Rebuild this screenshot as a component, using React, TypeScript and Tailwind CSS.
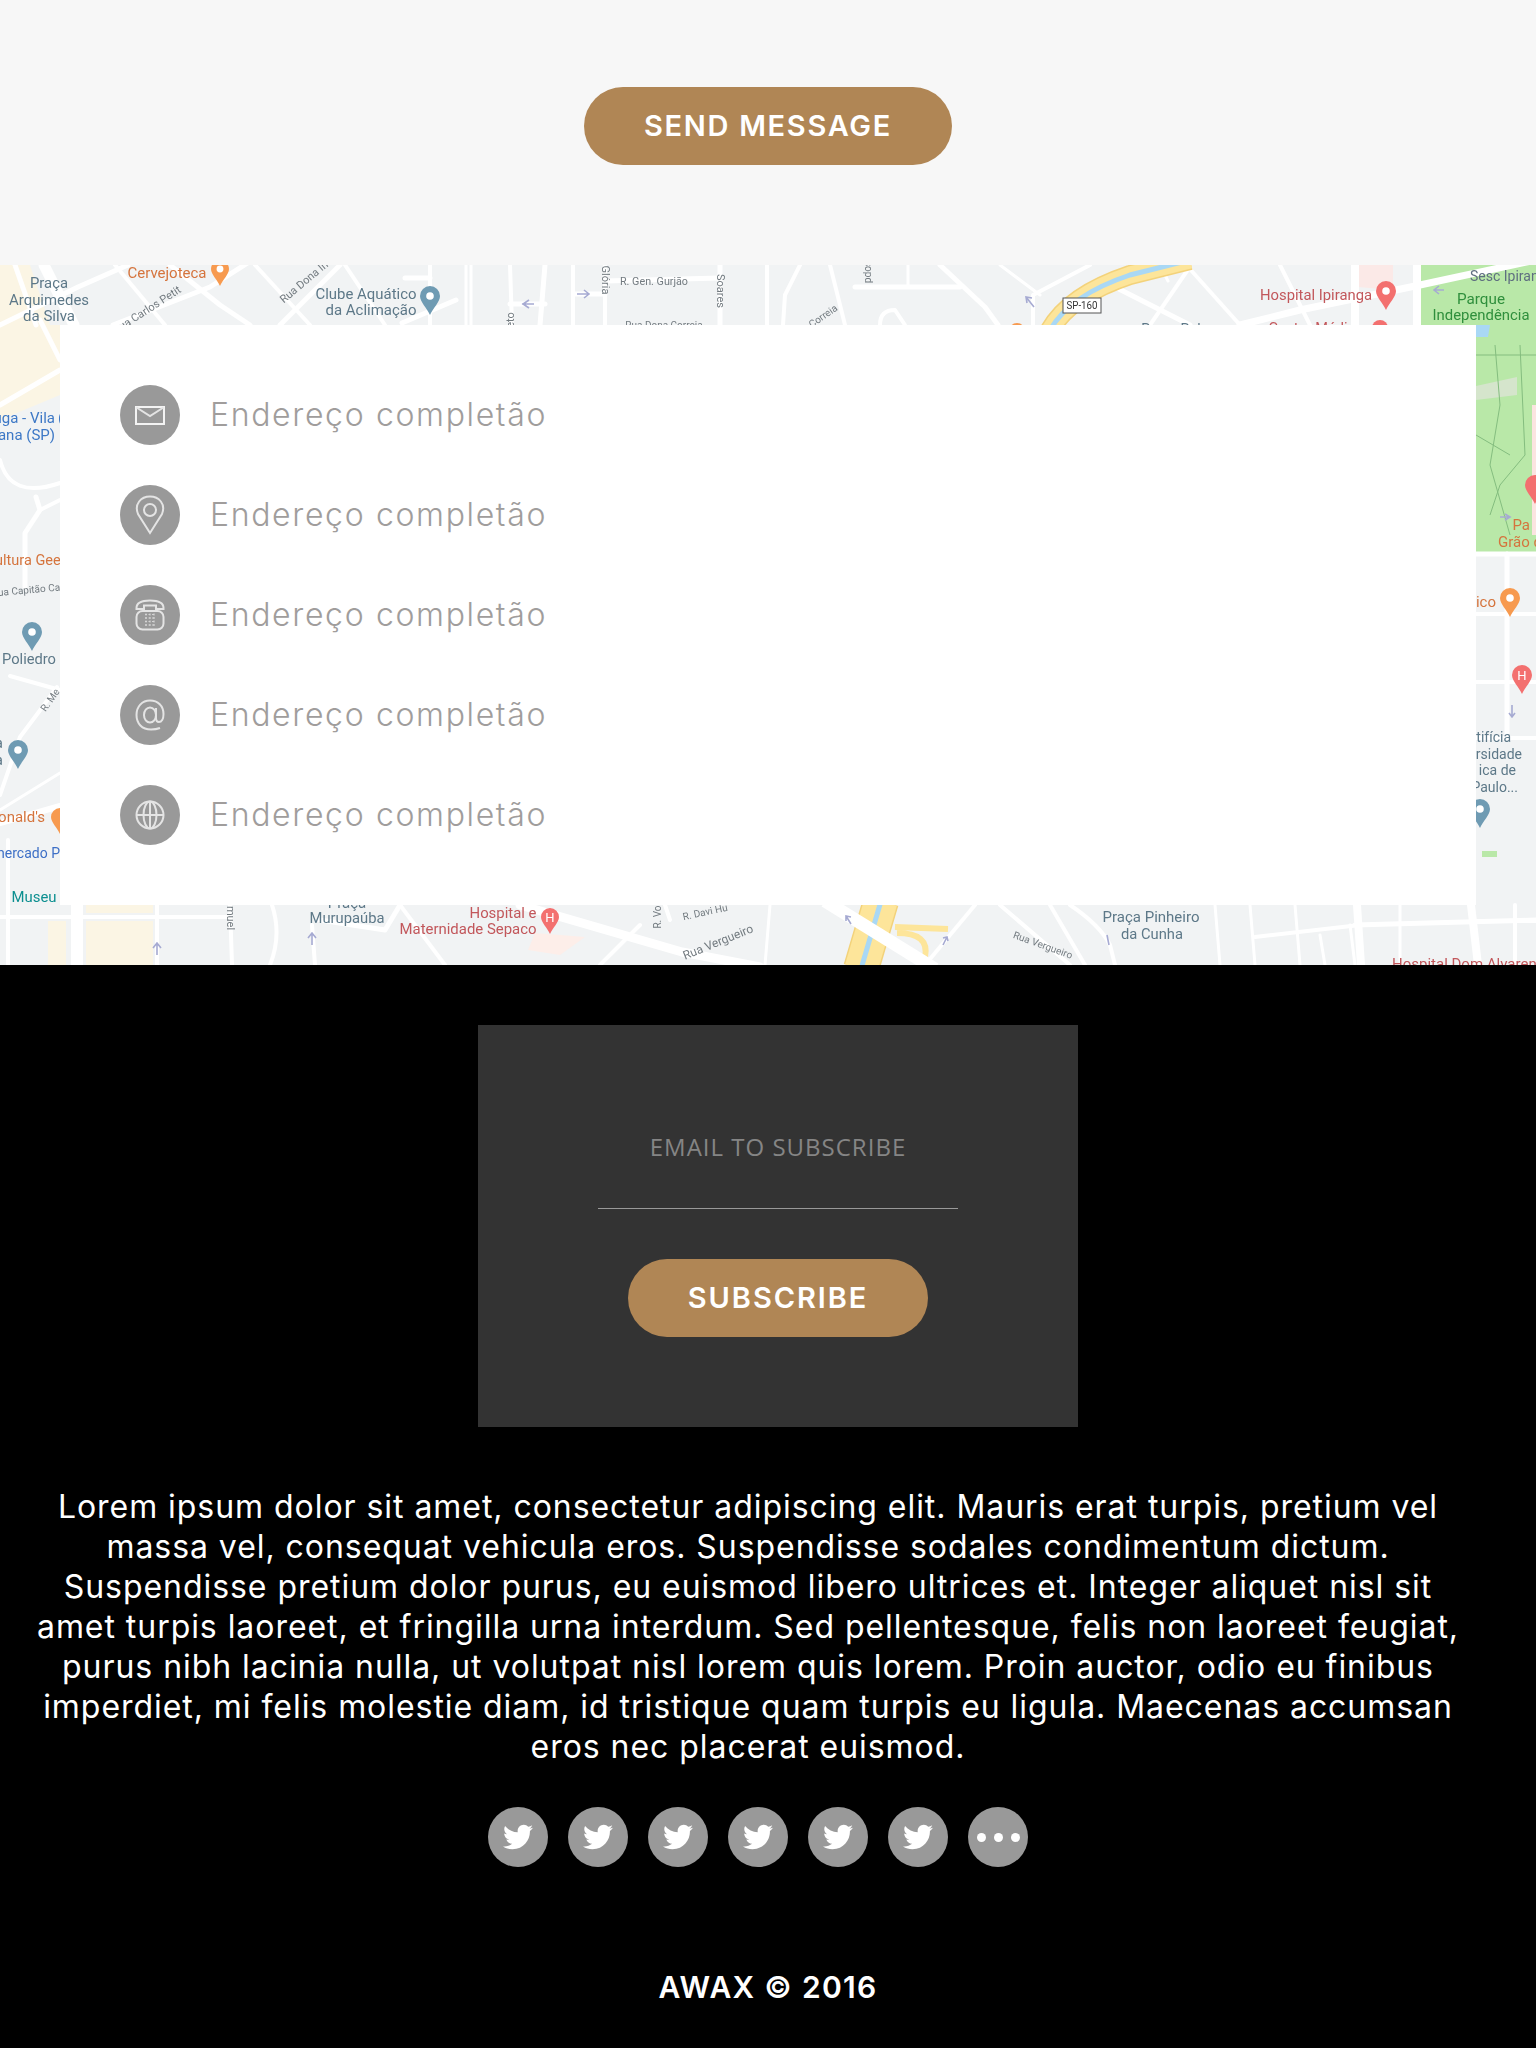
import React from "react";
import { FaTwitter } from "react-icons/fa";

const ADDRESS = "Endereço completão";
const PARAGRAPH = [
  "Lorem ipsum dolor sit amet, consectetur adipiscing elit. Mauris erat turpis, pretium vel",
  "massa vel, consequat vehicula eros. Suspendisse sodales condimentum dictum.",
  "Suspendisse pretium dolor purus, eu euismod libero ultrices et. Integer aliquet nisl sit",
  "amet turpis laoreet, et fringilla urna interdum. Sed pellentesque, felis non laoreet feugiat,",
  "purus nibh lacinia nulla, ut volutpat nisl lorem quis lorem. Proin auctor, odio eu finibus",
  "imperdiet, mi felis molestie diam, id tristique quam turpis eu ligula. Maecenas accumsan",
  "eros nec placerat euismod.",
];

const BLUE_GRAY = "#5d7888";
const ORANGE = "#d5743d";
const RED = "#c2575b";
const GRAY = "#737b80";

type Road = [string, number];
const ROADS: Road[] = [
  ["M15 0L36 60", 5], ["M44 0L74 60", 11], ["M0 60L78 22L128 0", 5], ["M113 60L210 22L260 -10", 5],
  ["M170 0L220 40L250 60", 5], ["M115 0L165 60", 4], ["M255 0L310 60", 4], ["M280 60L340 0", 5], ["M345 0L385 60", 4],
  ["M402 58L456 35", 5], ["M405 13H430", 5], ["M430 0V60", 4], ["M466 0V60", 3], ["M471 0V60", 3],
  ["M510 0L512 60", 4], ["M510 39H545", 5], ["M545 0L540 60", 5], ["M573 0V60", 4], ["M575 29H605", 5], ["M605 0V60", 4],
  ["M605 16L720 13", 5], ["M720 0V60", 5], ["M767 0V60", 4],
  ["M800 0L785 30L783 60", 4], ["M830 0L845 60", 4], ["M855 22H960", 5], ["M908 0V22", 3], ["M940 0L985 42L998 60", 5],
  ["M1033 60V30L1090 0", 4], ["M1000 0L1040 30", 3], ["M1111 20L1190 60", 5], ["M1189 3L1150 60", 4], ["M1189 3L1240 60", 4],
  ["M1280 0L1310 60", 4], ["M1240 60L1300 45L1420 20L1536 -5", 7], ["M1355 0V60", 8], ["M1417 0V60", 8],
  ["M880 60Q880 45 895 45L905 60", 4], ["M1160 0L1168 16", 3],
  ["M0 140L60 105", 5], ["M40 55L60 95", 5], ["M0 195Q10 235 60 218", 4], ["M36 232L40 245L25 268V322", 5], ["M40 245L60 235", 4],
  ["M10 411L60 425", 4], ["M57 422L38 448L20 472L0 530", 4], ["M0 558L60 541", 6], ["M60 508L0 545", 3], ["M8 575V640", 4],
  ["M8 640V700", 4], ["M77 640V700", 12], ["M157 640V700", 4], ["M0 652H230", 4], ["M230 640L232 700", 4],
  ["M272 640Q282 670 270 700", 4], ["M312 660L315 700", 4], ["M320 655L385 665L400 640", 5], ["M400 640Q430 680 445 700", 4],
  ["M520 640L682 687L760 702", 9], ["M600 700L640 660", 4], ["M670 655L665 640", 4], ["M765 700L770 640", 3],
  ["M925 700L975 640", 4], ["M1000 640L1070 700", 4], ["M1050 640L1085 700", 4], ["M1070 640Q1100 660 1110 680L1115 700", 4],
  ["M1215 640L1220 700", 3], ["M1250 640L1255 700", 3], ["M1255 672L1360 660", 4], ["M1320 670L1325 700", 3], ["M1350 660L1355 700", 3],
  ["M1295 640L1300 700", 3], ["M1357 640L1361 700", 8], ["M1400 640V700", 3], ["M1355 660L1536 655", 5], ["M1471 640L1478 700", 8],
  ["M1476 289H1536", 5], ["M1476 349H1536", 4], ["M1476 417H1536", 4], ["M1476 473H1536", 4], ["M1507 289V473", 5], ["M1515 640V700", 4], ["M1476 656H1536", 4],
];

const ARROWS = [
  "M522 39H534M529 35L523 39L529 43",
  "M577 29H589M584 25L589 29L584 33",
  "M1434 25H1444M1439 21L1434 25L1439 29",
  "M157 690V678M153 683L157 678L161 683",
  "M312 680V668M308 673L312 668L316 673",
  "M1026 32L1034 42M1027 38L1026 32L1032 33",
  "M1500 252H1510M1505 249L1510 252L1505 255",
  "M1512 440V452M1509 448L1512 452L1515 448",
  "M851 659L846 651M846 656L846 651L851 652",
  "M943 680L947 672M943 673L947 672L948 676",
  "M1107 670L1109 680",
];

function Pin({ x, y, c, r = 9, dot = true }: { x: number; y: number; c: string; r?: number; dot?: boolean }) {
  return (
    <g>
      <path d={`M${x} ${y + r * 1.9}C${x - r * 0.3} ${y + r * 1.2} ${x - r} ${y + r * 0.6} ${x - r} ${y}A${r} ${r} 0 1 1 ${x + r} ${y}C${x + r} ${y + r * 0.6} ${x + r * 0.3} ${y + r * 1.2} ${x} ${y + r * 1.9}Z`} fill={c} />
      {dot && <circle cx={x} cy={y} r={r * 0.38} fill="#fff" />}
    </g>
  );
}

function L({ x, y, t, c = BLUE_GRAY, s = 15, a = "middle", r = 0, w }: { x: number; y: number; t: string; c?: string; s?: number; a?: "start" | "middle" | "end"; r?: number; w?: number }) {
  return (
    <text x={x} y={y} fill={c} fontSize={s} textAnchor={a} dominantBaseline="central" transform={r ? `rotate(${r} ${x} ${y})` : undefined} textLength={w} lengthAdjust={w ? "spacingAndGlyphs" : undefined}>
      {t}
    </text>
  );
}

function MapArt() {
  return (
    <svg viewBox="0 0 1536 700" className="absolute inset-0 w-full h-full blur-[0.5px] [font-family:Roboto,sans-serif]" aria-hidden="true">
      <rect width="1536" height="700" fill="#f1f3f4" />
      <path d="M0 0H30L50 60H60V130L0 155Z" fill="#fbf5e4" />
      <path d="M86 656H153V700H86ZM86 640H153V648H86ZM48 656H66V700H48Z" fill="#fbf5e4" />
      <path d="M1358 0H1393V25L1358 22Z" fill="#fbe9e7" />
      <path d="M535 668L585 672L560 690L528 685Z" fill="#fdeee9" />
      <path d="M1420 0H1536V287H1476V60H1420Z" fill="#b9e8a8" />
      <path d="M1532 140H1536V270H1532Z" fill="#fbe4e0" />
      <path d="M1476 60H1490L1488 72H1476Z" fill="#a9d8f5" />
      <path d="M1476 121L1517 112V130L1476 135Z" fill="#d5e5cc" />
      <path d="M1482 586H1497V592H1482Z" fill="#b9e8a8" />
      <path d="M1495 80L1500 140L1490 200L1510 270M1520 80L1525 190L1500 220L1490 250M1476 90H1536M1476 170L1510 190" stroke="#84bd7f" strokeWidth="1" fill="none" />
      {ROADS.map(([d, w], i) => (
        <path key={i} d={d} stroke="#ffffff" strokeWidth={w} fill="none" strokeLinecap="round" strokeLinejoin="round" />
      ))}
      <g fill="none" strokeLinecap="butt">
        <path d="M1190 -5L1130 10Q1070 30 1050 65" stroke="#f3d27a" strokeWidth="20" />
        <path d="M1190 -5L1130 10Q1070 30 1050 65" stroke="#fde59a" strokeWidth="17" />
        <path d="M1190 -5L1130 10Q1070 30 1050 65" stroke="#a9d8f5" strokeWidth="5" />
        <path d="M881 636L861 704" stroke="#f3d27a" strokeWidth="36" />
        <path d="M881 636L861 704" stroke="#fde59a" strokeWidth="33" />
        <path d="M881 636L861 704" stroke="#a9d8f5" strokeWidth="5" />
        <path d="M895 662L948 664M897 668Q930 668 925 692" stroke="#fde59a" strokeWidth="6" />
      </g>
      <path d="M825 636L935 704" stroke="#fff" strokeWidth="13" fill="none" />
      <path d={ARROWS.join("")} stroke="#a6aad2" strokeWidth="1.6" fill="none" />

      <L x={49} y={18} t="Praça" w={38} />
      <L x={49} y={35} t="Arquimedes" w={80} />
      <L x={49} y={51} t="da Silva" w={52} />
      <L x={167} y={8} t="Cervejoteca" c={ORANGE} w={79} />
      <Pin x={220} y={4} c="#f79a4f" r={9} />
      <L x={147} y={45} t="Rua Carlos Petit" c={GRAY} s={11} r={-33} />
      <L x={304} y={17} t="Rua Dona In" c={GRAY} s={11} r={-40} />
      <L x={366} y={29} t="Clube Aquático" w={101} />
      <L x={371} y={45} t="da Aclimação" w={91} />
      <Pin x={430} y={31} c="#6f9bb3" r={10} />
      <L x={654} y={16} t="R. Gen. Gurjão" c={GRAY} s={11} w={68} />
      <L x={605} y={15} t="Glória" c={GRAY} s={11} r={90} />
      <L x={720} y={26} t="Soares" c={GRAY} s={11} r={90} />
      <L x={510} y={55} t="eto" c={GRAY} s={11} r={-90} />
      <L x={664} y={60} t="Rua Dona Correia" c={GRAY} s={10} />
      <L x={868} y={7} t="sopd" c={GRAY} s={10} r={90} />
      <L x={823} y={51} t="Correia" c={GRAY} s={10} r={-35} />
      <rect x={1063} y={33} width={38} height={15} fill="#fff" stroke="#555" strokeWidth="1" />
      <L x={1082} y={40.5} t="SP-160" c="#333" s={10} w={31} />
      <L x={1316} y={30} t="Hospital Ipiranga" c={RED} w={112} />
      <Pin x={1386} y={26} c="#f3706f" r={10} />
      <L x={1316} y={63} t="Centro Médico" c={RED} w={95} />
      <circle cx={1380} cy={63} r={8} fill="#f3706f" />
      <circle cx={1017} cy={66} r={8} fill="#f79a4f" />
      <L x={1171} y={64} t="Praça Pol" c={BLUE_GRAY} s={14} />
      <L x={1470} y={11} t="Sesc Ipiranga" a="start" c="#5f6f80" s={14} />
      <L x={1481} y={34} t="Parque" c="#2f8f3c" w={48} />
      <L x={1481} y={50} t="Independência" c="#2f8f3c" w={97} />

      <L x={55} y={153} t="uga - Vila" a="end" c="#3d78c6" s={15} />
      <L x={58} y={153} t="(" a="start" c="#3d78c6" s={15} />
      <L x={55} y={170} t="ana (SP)" a="end" c="#3d78c6" s={15} />
      <L x={68} y={295} t="Cultura Geek" a="end" c={ORANGE} s={14.5} />
      <L x={60} y={322} t="Rua Capitão Ca" a="end" c={GRAY} s={10} r={-5} />
      <Pin x={32} y={367} c="#6f9bb3" r={10} dot />
      <L x={29} y={394} t="Poliedro" w={54} />
      <L x={50} y={435} t="R. Me" c={GRAY} s={10} r={-55} />
      <Pin x={18} y={485} c="#6f9bb3" r={10} />
      <L x={3} y={478} t="a" a="end" />
      <L x={3} y={495} t="a" a="end" />
      <L x={45} y={552} t="McDonald's" a="end" c={ORANGE} s={15} />
      <Pin x={60} y={552} c="#f79a4f" r={9} dot={false} />
      <L x={60} y={588} t="Supermercado P" a="end" c="#3d6fc6" s={14} />
      <L x={34} y={632} t="Museu" c="#0c8f90" w={45} />

      <L x={347} y={638} t="Praça" />
      <L x={347} y={653} t="Murupaúba" w={75} />
      <L x={503} y={648} t="Hospital e" c={RED} w={67} />
      <L x={468} y={664} t="Maternidade Sepaco" c={RED} w={137} />
      <Pin x={550} y={652} c="#f3706f" r={9} dot={false} />
      <L x={550} y={652} t="H" c="#fff" s={13} />
      <L x={230} y={653} t="muel" c={GRAY} s={11} r={90} />
      <L x={718} y={677} t="Rua Vergueiro" c={GRAY} s={12} r={-22} />
      <L x={705} y={647} t="R. Davi Hu" c={GRAY} s={10} r={-12} />
      <L x={657} y={652} t="R. Vo" c={GRAY} s={10} r={-90} />
      <L x={1043} y={680} t="Rua Vergueiro" c={GRAY} s={10} r={20} />
      <L x={1151} y={652} t="Praça Pinheiro" w={97} />
      <L x={1152} y={669} t="da Cunha" w={62} />

      <L x={1530} y={260} t="Pa" a="end" c={ORANGE} s={15} />
      <L x={1498} y={277} t="Grão de" a="start" c={ORANGE} s={15} />
      <Pin x={1535} y={220} c="#f3706f" r={10} dot={false} />
      <L x={1496} y={337} t="ico" a="end" c={ORANGE} s={15} />
      <Pin x={1510} y={333} c="#f79a4f" r={10} />
      <Pin x={1522} y={410} c="#f3706f" r={10} dot={false} />
      <L x={1522} y={410} t="H" c="#fff" s={13} />
      <L x={1511} y={472} t="tifícia" a="end" s={14} />
      <L x={1522} y={489} t="rsidade" a="end" s={14} />
      <L x={1516} y={505} t="ica de" a="end" s={14} />
      <L x={1518} y={522} t="Paulo..." a="end" s={14} />
      <Pin x={1480} y={544} c="#6f9bb3" r={10} />
      <L x={1392} y={699} t="Hospital Dom Alvarenga" a="start" c={RED} s={15} />
    </svg>
  );
}

const iconStroke = { fill: "none", stroke: "#e4e4e4", strokeWidth: 2 };

function MailIcon() {
  return (
    <svg width="30" height="19" viewBox="0 0 30 19">
      <rect x="1" y="1" width="28" height="17" fill="none" stroke="#f3f3f3" strokeWidth="2" />
      <path d="M1.5 1.5L15 10L28.5 1.5" fill="none" stroke="#e4e4e4" strokeWidth="2" />
    </svg>
  );
}
function PinIcon() {
  return (
    <svg width="30" height="40" viewBox="0 0 30 40">
      <path d="M15 38L3 19C-1 9 6 1.5 15 1.5S31 9 27 19Z" {...iconStroke} />
      <circle cx="15" cy="15" r="6" {...iconStroke} />
    </svg>
  );
}
function PhoneIcon() {
  return (
    <svg width="30" height="32" viewBox="0 0 30 32">
      <path d="M1.5 9C1.5 4 7 1.5 15 1.5S28.5 4 28.5 9V10H21V6.5H9V10H1.5Z" {...iconStroke} />
      <rect x="1.5" y="12" width="27" height="18.5" rx="6" {...iconStroke} />
      <path d="M10 15.5H20M10 19H20M10 22.5H20M10 26H20M11 14.5V27M15 14.5V27M19 14.5V27" fill="none" stroke="#d4d4d4" strokeWidth="1.2" strokeDasharray="2 1.5" />
    </svg>
  );
}
function AtIcon() {
  return (
    <svg width="30" height="32" viewBox="0 0 30 32">
      <path d="M25 29Q21 30.5 16 30.5C7 30.5 1.5 24.5 1.5 16S7 1.5 15 1.5 28.5 7 28.5 15C28.5 20 26.5 23 24 23 22 23 21 21.5 21 19V9" {...iconStroke} />
      <ellipse cx="15" cy="16" rx="6" ry="7.5" {...iconStroke} />
    </svg>
  );
}
function GlobeIcon() {
  return (
    <svg width="30" height="30" viewBox="0 0 30 30">
      <circle cx="15" cy="15" r="13.5" {...iconStroke} />
      <ellipse cx="15" cy="15" rx="6.5" ry="13.5" {...iconStroke} />
      <path d="M15 1.5V28.5M1.5 15H28.5" {...iconStroke} />
    </svg>
  );
}

const ICONS = [MailIcon, PinIcon, PhoneIcon, AtIcon, GlobeIcon];

export default function App() {
  return (
    <div className="w-[1536px] h-[2048px] overflow-hidden bg-black [font-family:Inter,sans-serif]">
      <section className="h-[265px] bg-[#f7f7f7] pt-[87px] flex justify-center items-start">
        <button className="w-[368px] h-[78px] rounded-[39px] bg-[#b08655] text-white text-[29px] font-semibold tracking-[1.7px]">SEND MESSAGE</button>
      </section>

      <section className="relative h-[700px] p-[60px]">
        <MapArt />
        <div className="relative h-[580px] bg-white p-[60px] flex flex-col gap-[40px]">
          {ICONS.map((Icon, i) => (
            <div key={i} className="flex items-center gap-[30px] h-[60px]">
              <span className="w-[60px] h-[60px] rounded-full bg-[#999999] flex items-center justify-center">
                <span className="flex blur-[0.3px]">
                  <Icon />
                </span>
              </span>
              <span className="text-[32px] font-light text-[#a09d9c] leading-[60px] tracking-[1.65px]">{ADDRESS}</span>
            </div>
          ))}
        </div>
      </section>

      <section className="pt-[60px] flex flex-col">
        <div className="ml-[478px] w-[600px] h-[402px] bg-[#333333] pt-[60px] flex flex-col items-center">
          <input
            type="email"
            placeholder="EMAIL TO SUBSCRIBE"
            className="w-[360px] h-[124px] bg-transparent border-b border-[#999999] text-center text-[24px] tracking-[1px] outline-none placeholder:text-[#858585] [font-family:'Open_Sans',sans-serif]"
          />
          <button className="mt-[50px] w-[300px] h-[78px] rounded-[39px] bg-[#b08655] text-white text-[29px] font-semibold tracking-[1.9px]">SUBSCRIBE</button>
        </div>

        <div className="mt-[60px] w-[1496px] text-center text-white text-[32px] leading-[40px] tracking-[0.95px]">
          {PARAGRAPH.map((line) => (
            <span key={line} className="block whitespace-nowrap">{line}</span>
          ))}
        </div>

        <div className="mt-[40px] ml-[488px] flex gap-[20px]">
          {[0, 1, 2, 3, 4, 5].map((i) => (
            <span key={i} className="w-[60px] h-[60px] rounded-full bg-[#999999] flex items-center justify-center text-white">
              <FaTwitter size={30} className="blur-[0.4px]" />
            </span>
          ))}
          <span className="w-[60px] h-[60px] rounded-full bg-[#999999] flex items-center justify-center gap-[8px]">
            <i className="w-[9px] h-[9px] rounded-full bg-white" />
            <i className="w-[9px] h-[9px] rounded-full bg-white" />
            <i className="w-[9px] h-[9px] rounded-full bg-white" />
          </span>
        </div>

        <p className="mt-[100px] text-center text-white text-[30px] leading-[40px] font-semibold tracking-[1.3px]">AWAX © 2016</p>
      </section>
    </div>
  );
}
